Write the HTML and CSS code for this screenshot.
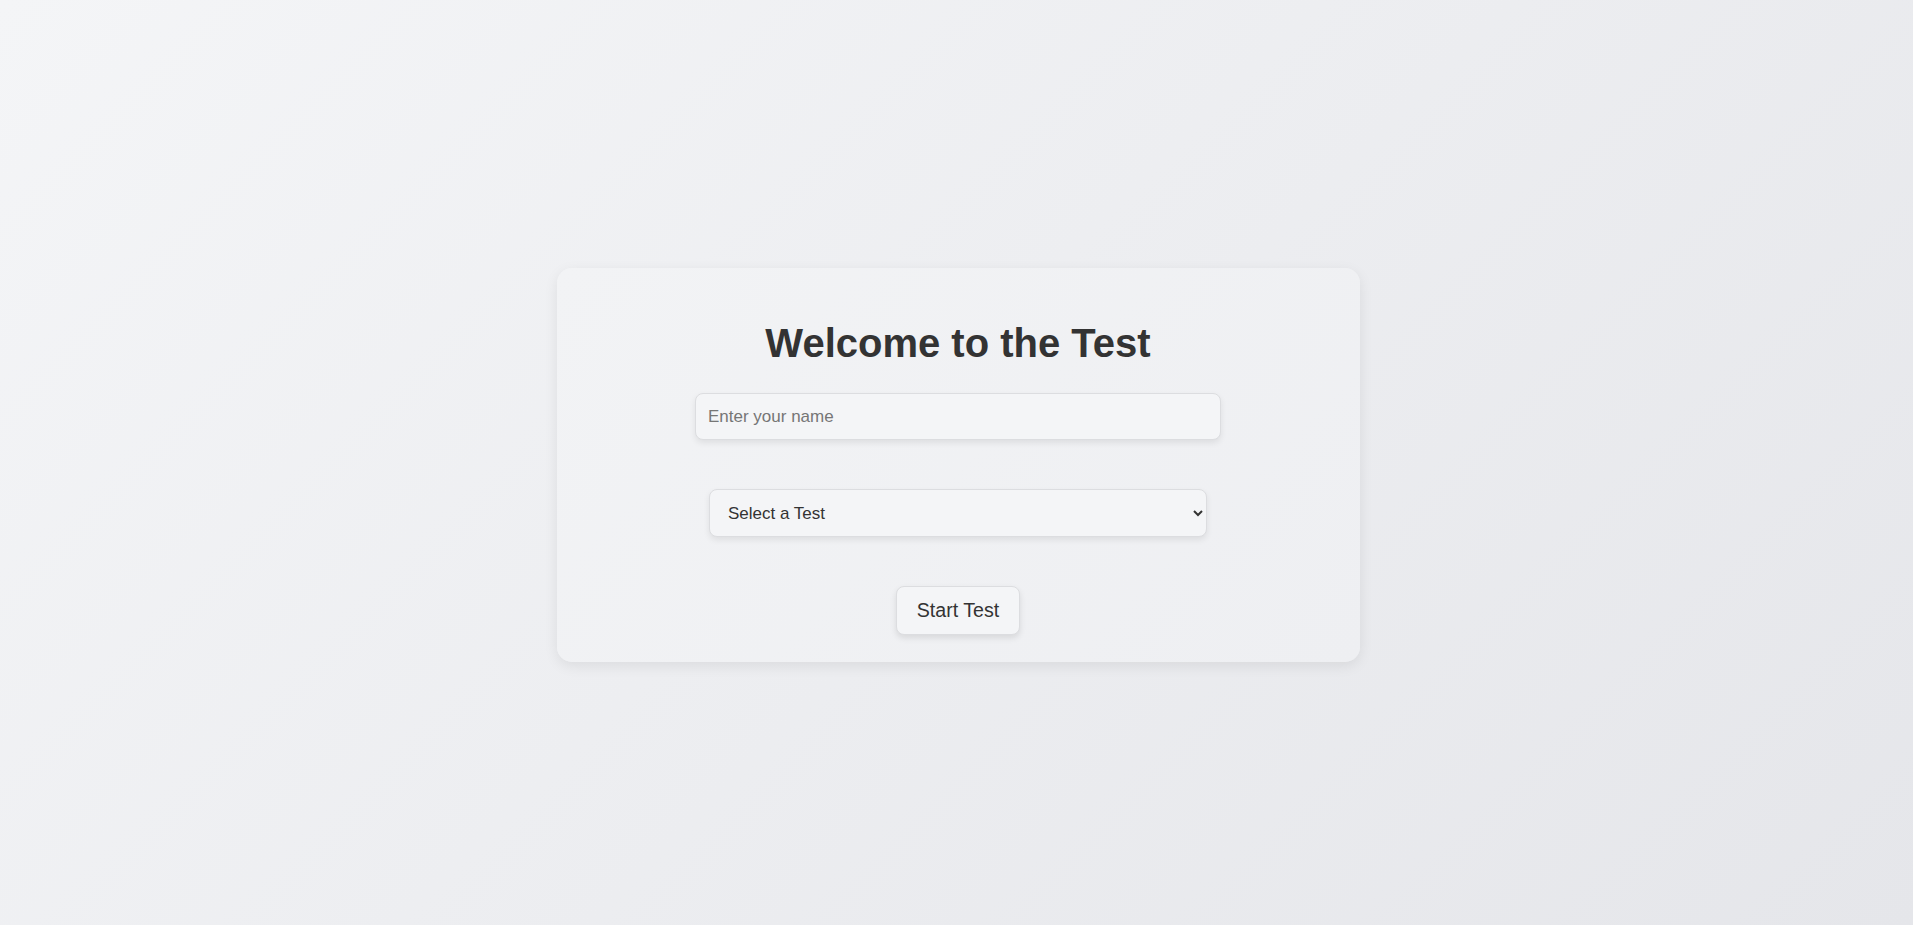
FILE: index.html
```html
<!DOCTYPE html>
<html lang="en">
<head>
<meta charset="utf-8">
<title>Welcome to the Test</title>
<link rel="stylesheet" href="styles.css">
</head>
<body>
  <main class="card">
    <h1 class="title">Welcome to the Test</h1>
    <input class="name-input" type="text" placeholder="Enter your name">
    <select class="test-select">
      <option>Select a Test</option>
      <option>Math Test</option>
      <option>Science Test</option>
    </select>
    <button class="start-btn" type="button">Start Test</button>
  </main>
</body>
</html>
```

FILE: styles.css
```css
html, body {
  margin: 0;
  padding: 0;
}

body {
  min-height: 100vh;
  display: flex;
  align-items: center;
  justify-content: center;
  background: linear-gradient(135deg, #f4f5f7 0%, #e5e6ea 100%);
  font-family: "Liberation Sans", Arial, sans-serif;
  color: #333;
  box-sizing: border-box;
  padding: 5px 0 0 3px;
}

.card {
  width: 803px;
  box-sizing: border-box;
  padding: 52px 0 27px;
  display: flex;
  flex-direction: column;
  align-items: center;
  border-radius: 15px;
  background: linear-gradient(135deg, #f2f3f5 0%, #eeeff2 100%);
  box-shadow: 0 4px 14px rgba(0, 0, 0, 0.08);
}

.title {
  margin: 0;
  font-size: 40px;
  line-height: 46px;
  font-weight: bold;
  color: #333;
}

.name-input {
  margin-top: 27px;
  width: 500px;
  box-sizing: content-box;
  padding: 12px;
  border: 1px solid #dcdde0;
  border-radius: 8px;
  background: #f4f5f7;
  font-family: inherit;
  font-size: 17px;
  line-height: 21px;
  color: #333;
  box-shadow: 0 3px 6px rgba(0, 0, 0, 0.08);
  outline: none;
}

.name-input::placeholder {
  color: #767676;
}

.test-select {
  margin-top: 49px;
  width: 498px;
  height: 48px;
  box-sizing: border-box;
  padding: 0 8px 0 14px;
  border: 1px solid #dcdde0;
  border-radius: 8px;
  background: #f4f5f7;
  font-family: inherit;
  font-size: 17px;
  color: #333;
  box-shadow: 0 3px 6px rgba(0, 0, 0, 0.08);
  outline: none;
}

.start-btn {
  margin-top: 49px;
  padding: 12px 20px;
  height: 49px;
  box-sizing: border-box;
  border: 1px solid #dcdde0;
  border-radius: 8px;
  background: #f4f5f7;
  font-family: inherit;
  font-size: 19.6px;
  color: #333;
  box-shadow: 0 3px 6px rgba(0, 0, 0, 0.1);
  cursor: pointer;
}
```
